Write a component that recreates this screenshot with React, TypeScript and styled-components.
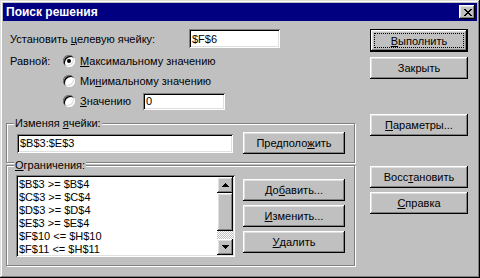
import React from 'react';
import styled, { createGlobalStyle, css } from 'styled-components';

/* ── Win95 bevels ── */
const raised = css`
  box-shadow: inset -1px -1px #000, inset 1px 1px #fff, inset -2px -2px #808080, inset 2px 2px #dfdfdf;
`;
const sunken = css`
  box-shadow: inset 1px 1px #808080, inset -1px -1px #fff, inset 2px 2px #000, inset -2px -2px #dfdfdf;
`;

const Global = createGlobalStyle`
  html, body { margin: 0; padding: 0; background: #c0c0c0; }
  body {
    font-family: "Liberation Sans", Arial, sans-serif;
    font-size: 11px;
    color: #000;
  }
  u { text-decoration: underline; text-underline-offset: 1px; }
`;

const Window = styled.div`
  width: 480px;
  height: 278px;
  box-sizing: border-box;
  padding: 3px;
  background: #c0c0c0;
  box-shadow: inset -1px -1px #000, inset 1px 1px #dfdfdf, inset -2px -2px #808080, inset 2px 2px #fff;
  display: flex;
  flex-direction: column;
`;

const TitleBar = styled.div`
  height: 18px;
  background: #000080;
  color: #fff;
  display: flex;
  align-items: center;
  justify-content: space-between;
  padding: 0 2px 0 3px;
  font-size: 12px;
  font-weight: 700;
`;

const CloseBtn = styled.div`
  width: 16px;
  height: 14px;
  background: #c0c0c0;
  ${raised};
  display: flex;
  align-items: center;
  justify-content: center;
  padding-left: 1px;
  box-sizing: border-box;
`;

const Body = styled.div`
  display: flex;
  padding-top: 8px;
`;

const LeftCol = styled.div`
  width: 349px;
  margin-left: 3px;
  display: flex;
  flex-direction: column;
`;

const RightCol = styled.div`
  width: 98px;
  margin-left: 15px;
  display: flex;
  flex-direction: column;
`;

const TargetRow = styled.div`
  display: flex;
  align-items: center;
  height: 19px;
  padding-left: 4px;
`;

const Label = styled.span<{ $w?: number }>`
  width: ${({ $w }) => ($w ? `${$w}px` : 'auto')};
  flex-shrink: 0;
  white-space: nowrap;
`;

const Edit = styled.div<{ $w: number; $h: number }>`
  width: ${({ $w }) => $w}px;
  height: ${({ $h }) => $h}px;
  box-sizing: border-box;
  background: #fff;
  ${sunken};
  padding: 0 3px;
  display: flex;
  align-items: center;
  flex-shrink: 0;
`;

const RadioBlock = styled.div`
  display: grid;
  grid-template-columns: 53px 1fr;
  padding-left: 4px;
  margin-top: 3px;
`;

const RadioList = styled.div`
  display: flex;
  flex-direction: column;
`;

const RadioRow = styled.div`
  height: 20px;
  display: flex;
  align-items: center;
`;

const RadioDot = styled.span<{ $on?: boolean }>`
  width: 12px;
  height: 12px;
  border-radius: 50%;
  background: #fff;
  ${sunken};
  margin-right: 5px;
  position: relative;
  flex-shrink: 0;

  &::after {
    content: '';
    display: ${({ $on }) => ($on ? 'block' : 'none')};
    position: absolute;
    left: 4px;
    top: 4px;
    width: 4px;
    height: 4px;
    border-radius: 50%;
    background: #000;
  }
`;

/* etched frame: dark line with a white line just inside/outside */
const Group = styled.div<{ $h: number; $mt: number }>`
  height: ${({ $h }) => $h}px;
  margin-top: ${({ $mt }) => $mt}px;
  box-sizing: border-box;
  border: 1px solid #808080;
  box-shadow: inset 1px 1px #fff, 1px 1px #fff;
  display: flex;
  flex-direction: column;
`;

const GroupLabel = styled.span`
  display: block;
  width: fit-content;
  margin: -7px 0 0 7px;
  padding: 0 1px;
  line-height: 13px;
  background: #c0c0c0;
`;

const GroupRow = styled.div<{ $mt: number; $pl: number; $center?: boolean }>`
  display: flex;
  align-items: ${({ $center }) => ($center ? 'center' : 'flex-start')};
  margin-top: ${({ $mt }) => $mt}px;
  padding-left: ${({ $pl }) => $pl}px;
`;

const Button = styled.div<{ $h?: number; $mt?: number; $default?: boolean }>`
  height: ${({ $h }) => $h ?? 22}px;
  margin-top: ${({ $mt }) => $mt ?? 0}px;
  box-sizing: border-box;
  background: #c0c0c0;
  display: flex;
  align-items: center;
  justify-content: center;
  white-space: nowrap;
  position: relative;
  flex-shrink: 0;
  ${({ $default }) =>
    $default
      ? css`
          box-shadow: inset 0 0 0 1px #000, inset -2px -2px #000, inset 2px 2px #fff,
            inset -3px -3px #808080, inset 3px 3px #dfdfdf;
          &::after {
            content: '';
            position: absolute;
            inset: 4px;
            border: 1px dotted #000;
          }
        `
      : raised};
`;

const SideButtons = styled.div<{ $ml: number; $mt?: number }>`
  width: 102px;
  margin-left: ${({ $ml }) => $ml}px;
  margin-top: ${({ $mt }) => $mt ?? 0}px;
  display: flex;
  flex-direction: column;
  gap: 4px;
`;

const ListBox = styled.div`
  width: 219px;
  height: 82px;
  box-sizing: border-box;
  padding: 2px;
  background: #fff;
  ${sunken};
  display: flex;
  flex-shrink: 0;
`;

const Items = styled.div`
  flex: 1;
  padding: 1px 0 0 1px;
  line-height: 13px;
  overflow: hidden;
`;

const ScrollBar = styled.div`
  width: 16px;
  display: flex;
  flex-direction: column;
`;

const ScrollBtn = styled.div`
  width: 16px;
  height: 16px;
  background: #c0c0c0;
  ${raised};
  display: flex;
  align-items: center;
  justify-content: center;
`;

const Thumb = styled.div`
  height: 38px;
  background: #c0c0c0;
  ${raised};
`;

const Track = styled.div`
  flex: 1;
  background: repeating-conic-gradient(#c0c0c0 0 25%, #fff 0 50%) 0 0 / 2px 2px;
`;

const CloseGlyph = () => (
  <svg width="8" height="7" viewBox="0 0 8 7" shapeRendering="crispEdges">
    <path
      d="M0 0h2v1H0zM6 0h2v1H6zM1 1h2v1H1zM5 1h2v1H5zM2 2h4v1H2zM3 3h2v1H3zM2 4h4v1H2zM1 5h2v1H1zM5 5h2v1H5zM0 6h2v1H0zM6 6h2v1H6z"
      fill="#000"
    />
  </svg>
);

const Arrow = ({ down }: { down?: boolean }) => (
  <svg width="7" height="4" viewBox="0 0 7 4" shapeRendering="crispEdges">
    <path
      d={down ? 'M0 0h7v1H0zM1 1h5v1H1zM2 2h3v1H2zM3 3h1v1H3z' : 'M3 0h1v1H3zM2 1h3v1H2zM1 2h5v1H1zM0 3h7v1H0z'}
      fill="#000"
    />
  </svg>
);

const constraints = [
  '$B$3 >= $B$4',
  '$C$3 >= $C$4',
  '$D$3 >= $D$4',
  '$E$3 >= $E$4',
  '$F$10 <= $H$10',
  '$F$11 <= $H$11',
];

export default function App() {
  return (
    <>
      <Global />
      <Window>
        <TitleBar>
          <span>Поиск решения</span>
          <CloseBtn><CloseGlyph /></CloseBtn>
        </TitleBar>

        <Body>
          <LeftCol>
            <TargetRow>
              <Label $w={179}>Установить <u>ц</u>елевую ячейку:</Label>
              <Edit $w={91} $h={19}>$F$6</Edit>
            </TargetRow>

            <RadioBlock>
              <RadioRow>Равной:</RadioRow>
              <RadioList>
                <RadioRow>
                  <RadioDot $on />
                  <span><u>М</u>аксимальному значению</span>
                </RadioRow>
                <RadioRow>
                  <RadioDot />
                  <span>Ми<u>н</u>имальному значению</span>
                </RadioRow>
                <RadioRow>
                  <RadioDot />
                  <Label $w={63}><u>З</u>начению</Label>
                  <Edit $w={82} $h={17}>0</Edit>
                </RadioRow>
              </RadioList>
            </RadioBlock>

            <Group $h={40} $mt={12}>
              <GroupLabel>Изменяя <u>я</u>чейки:</GroupLabel>
              <GroupRow $mt={2} $pl={10} $center>
                <Edit $w={216} $h={19}>$B$3:$E$3</Edit>
                <SideButtons $ml={10}>
                  <Button>Предполо<u>ж</u>ить</Button>
                </SideButtons>
              </GroupRow>
            </Group>

            <Group $h={101} $mt={2}>
              <GroupLabel><u>О</u>граничения:</GroupLabel>
              <GroupRow $mt={3} $pl={9}>
                <ListBox>
                  <Items>
                    {constraints.map((c) => (
                      <div key={c}>{c}</div>
                    ))}
                  </Items>
                  <ScrollBar>
                    <ScrollBtn><Arrow /></ScrollBtn>
                    <Thumb />
                    <Track />
                    <ScrollBtn><Arrow down /></ScrollBtn>
                  </ScrollBar>
                </ListBox>
                <SideButtons $ml={8} $mt={4}>
                  <Button>До<u>б</u>авить...</Button>
                  <Button><u>И</u>зменить...</Button>
                  <Button><u>У</u>далить</Button>
                </SideButtons>
              </GroupRow>
            </Group>
          </LeftCol>

          <RightCol>
            <Button $h={23} $default><u>В</u>ыполнить</Button>
            <Button $mt={5}>Закрыть</Button>
            <Button $mt={35}><u>П</u>араметры...</Button>
            <Button $mt={30}>Восс<u>т</u>ановить</Button>
            <Button $mt={4}><u>С</u>правка</Button>
          </RightCol>
        </Body>
      </Window>
    </>
  );
}
